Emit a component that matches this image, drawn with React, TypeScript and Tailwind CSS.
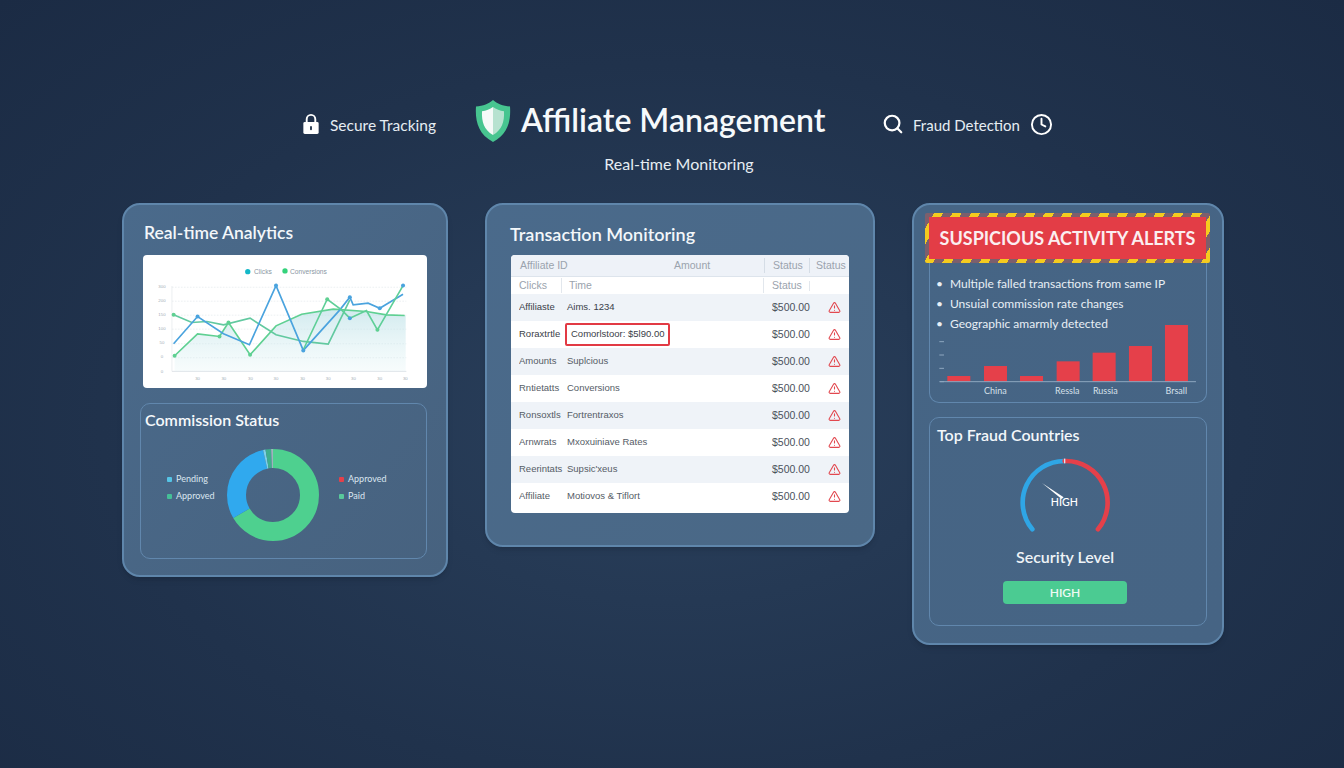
import { Clock, Search, TriangleAlert } from "lucide-react"

const rows = [
  { a: "Affiliaste", b: "Aims. 1234", dark: true },
  { a: "Roraxtrtle", b: "Comorlstoor: $5l90.00", flagged: true, dark: true },
  { a: "Amounts", b: "Suplcious" },
  { a: "Rntietatts", b: "Conversions" },
  { a: "Ronsoxtls", b: "Fortrentraxos" },
  { a: "Arnwrats", b: "Mxoxuiniave Rates" },
  { a: "Reerintats", b: "Supsic'xeus" },
  { a: "Affiliate", b: "Motiovos & Tiflort" },
]

const yTicks = [
  { y: 262, t: "300" },
  { y: 304, t: "200" },
  { y: 346, t: "150" },
  { y: 388, t: "100" },
  { y: 432, t: "50" },
  { y: 474, t: "0" },
  { y: 518, t: "0" },
]

const xTicks = [232, 311, 391, 468, 548, 625, 701, 780, 857]

const bars = [
  { x: 112, top: 528 },
  { x: 222, top: 498 },
  { x: 330, top: 528 },
  { x: 440, top: 484 },
  { x: 548, top: 458 },
  { x: 657, top: 438 },
  { x: 765, top: 375 },
]

function LineChart() {
  return (
    <svg viewBox="70 165 850 400" className="block h-[133px] w-[284px]" fontFamily="'Liberation Sans', sans-serif">
      <defs>
        <linearGradient id="area" x1="0" y1="0" x2="0" y2="1">
          <stop offset="0" stopColor="#b9dfe6" stopOpacity="0.65" />
          <stop offset="1" stopColor="#d8f0f2" stopOpacity="0.2" />
        </linearGradient>
      </defs>
      {yTicks.slice(0, 6).map((t) => (
        <line key={t.y} x1="155" x2="860" y1={t.y} y2={t.y} stroke="#e3e8ec" strokeWidth="2" strokeDasharray="5 4" />
      ))}
      <line x1="155" x2="860" y1="515" y2="515" stroke="#d0d7dd" strokeWidth="2" />
      <line x1="155" x2="155" y1="258" y2="515" stroke="#e3e8ec" strokeWidth="2" />
      <polygon
        points="163,468 232,402 298,410 325,368 390,465 468,378 545,343 640,328 740,335 800,345 858,347 858,515 163,515"
        fill="url(#area)"
      />
      <circle cx="383" cy="215" r="8" fill="#14b8c8" />
      <text x="402" y="222" fontSize="20" fill="#8a97a3">Clicks</text>
      <circle cx="495" cy="213" r="8" fill="#34d27b" />
      <text x="510" y="222" fontSize="20" fill="#8a97a3">Conversions</text>
      {yTicks.map((t) => (
        <text key={t.y} x="125" y={t.y + 2} fontSize="13" textAnchor="middle" fill="#a3adb6">{t.t}</text>
      ))}
      {xTicks.map((x) => (
        <text key={x} x={x} y="542" fontSize="13" textAnchor="middle" fill="#a3adb6">30</text>
      ))}
      <polyline
        points="160,345 215,368 260,365 310,375 390,355 468,405 550,425 625,433 690,300"
        fill="none"
        stroke="#62c9a0"
        strokeWidth="5"
      />
      <polyline
        points="163,468 232,402 298,410 325,368 390,465 468,378 545,343 640,328 740,335 800,345 855,347"
        fill="none"
        stroke="#5fd092"
        strokeWidth="5"
      />
      <polyline
        points="160,432 232,350 310,402 388,435 468,257 550,452 660,330 690,292 700,315 745,310 780,325 850,283"
        fill="none"
        stroke="#4aa3de"
        strokeWidth="5"
      />
      <polyline
        points="550,450 622,298 665,330 690,355 740,332 773,390 850,257"
        fill="none"
        stroke="#5fcf98"
        strokeWidth="5"
      />
      {[[232, 350], [468, 257], [550, 452], [690, 292], [690, 355], [780, 325], [850, 257]].map(([x, y]) => (
        <circle key={`${x}-${y}`} cx={x} cy={y} r="6" fill="#4aa3de" />
      ))}
      {[[160, 345], [163, 468], [298, 410], [325, 368], [390, 465], [622, 298], [773, 390]].map(([x, y]) => (
        <circle key={`${x}-${y}`} cx={x} cy={y} r="6" fill="#5fd092" />
      ))}
    </svg>
  )
}

function Donut() {
  const c = 2 * Math.PI * 36.5
  const seg = (from: number, to: number, color: string) => (
    <circle
      cx="46"
      cy="46"
      r="36.5"
      fill="none"
      stroke={color}
      strokeWidth="19"
      strokeDasharray={`${((to - from) / 360) * c} ${c}`}
      strokeDashoffset={-(from / 360) * c}
      transform="rotate(-90 46 46)"
    />
  )
  return (
    <svg viewBox="0 0 92 92" className="h-[92px] w-[92px]">
      {seg(0, 239.4, "#4ed08f")}
      {seg(239.4, 347, "#30a9ee")}
      {seg(347, 350, "#7fd0e8")}
      {seg(350, 357, "#3fae8e")}
      {seg(357, 360, "#9fb4bd")}
    </svg>
  )
}

function Legend({ color, label }: { color: string; label: string }) {
  return (
    <div className="flex items-center gap-[4px] text-[9px] leading-[10px] text-[#dbe6f0]">
      <span className={`h-[5px] w-[5px] rounded-[1px] ${color}`} />
      {label}
    </div>
  )
}

function LockIcon() {
  return (
    <svg viewBox="0 0 18 23" className="h-[22px] w-[18px]">
      <path d="M4.5 10V6.5a4.5 4.5 0 0 1 9 0V10" fill="none" stroke="#fff" strokeWidth="2" />
      <rect x="1" y="9.5" width="16" height="12.5" rx="1.5" fill="#fff" />
      <rect x="8" y="13.5" width="2" height="4.5" rx="1" fill="#26384f" />
    </svg>
  )
}

function ShieldIcon() {
  return (
    <svg viewBox="0 0 36 42" className="h-[42px] w-[36px]">
      <defs>
        <linearGradient id="shieldFace" x1="0" y1="0" x2="1" y2="0">
          <stop offset="0.5" stopColor="#f5faf8" />
          <stop offset="0.5" stopColor="#b7e2d0" />
        </linearGradient>
      </defs>
      <path d="M18 0c4 3.500 10 6 17 6.500C36 21 33 34 18 42 3 34 0 21 1 6.500 8 6 14 3.500 18 0z" fill="#47c590" />
      <path d="M18 7c3 2.200 7 3.800 11 4.200C29.500 22 27 29.500 18 35 9 29.500 6.500 22 7 11.200 11 10.800 15 9.200 18 7z" fill="url(#shieldFace)" />
    </svg>
  )
}

function HazardBanner() {
  return (
    <div className="h-[50px] w-[285px] rounded-[2px] bg-[repeating-linear-gradient(-60deg,#f4cb1f_0px,#f4cb1f_8px,#7d5f6c_8px,#7d5f6c_16px)] p-[4px]">
      <div className="flex h-full items-center justify-center bg-[#e33d46] font-['Lato',sans-serif] text-[18px] font-bold leading-none text-[#fbeef0]">
        SUSPICIOUS ACTIVITY ALERTS
      </div>
    </div>
  )
}

function BarChart() {
  return (
    <svg viewBox="60 375 820 212" className="-ml-[3px] -mt-[9px] block h-[70.700px] w-[273.300px]" fontFamily="'Lato', sans-serif">
      {[425, 465, 505, 545].map((y) => (
        <line key={y} x1="88" x2="102" y1={y} y2={y} stroke="#8fa8c0" strokeWidth="3" />
      ))}
      {bars.map((b) => (
        <rect key={b.x} x={b.x} y={b.top} width="69" height={545 - b.top} fill="#e5404a" />
      ))}
      <line x1="90" x2="858" y1="545" y2="545" stroke="#8fa8c0" strokeWidth="3" />
      <text x="256" y="582" fontSize="27" textAnchor="middle" fill="#d5e0ea">China</text>
      <text x="472" y="582" fontSize="27" textAnchor="middle" fill="#d5e0ea">Ressla</text>
      <text x="586" y="582" fontSize="27" textAnchor="middle" fill="#d5e0ea">Russia</text>
      <text x="799" y="582" fontSize="27" textAnchor="middle" fill="#d5e0ea">Brsall</text>
    </svg>
  )
}

function Gauge() {
  return (
    <svg viewBox="325 135 280 235" className="block h-[78.300px] w-[93.300px]" fontFamily="'Lato', sans-serif">
      <path d="M368 352 A125 125 0 0 1 465 147" fill="none" stroke="#2fa6e6" strokeWidth="14" strokeLinecap="round" />
      <path d="M465 147 A125 125 0 0 1 565 352" fill="none" stroke="#e5404a" strokeWidth="14" strokeLinecap="round" />
      <rect x="463" y="140" width="4" height="14" fill="#dbe6f0" />
      <polygon points="397,213 462,256 456,261" fill="#fff" />
      <text x="464" y="283" fontSize="32" textAnchor="middle" fill="#fff" fontWeight="500">HIGH</text>
    </svg>
  )
}

export default function App() {
  return (
    <div className="h-[768px] w-full overflow-hidden bg-[radial-gradient(ellipse_at_50%_55%,#2a405c_0%,#20324c_60%,#1b2b44_100%)] pt-[100px] font-['Lato',sans-serif] text-white">
      <div className="flex h-[42px] items-center pl-[302px]">
        <div className="mt-[6px]">
          <LockIcon />
        </div>
        <span className="ml-[10px] mt-[10px] w-[106px] whitespace-nowrap text-[15.500px] text-[#e6edf3]">Secure Tracking</span>
        <div className="ml-[39px]">
          <ShieldIcon />
        </div>
        <h1 className="-mt-[2px] ml-[10px] w-[306px] whitespace-nowrap text-[32px] font-semibold leading-[40px] text-[#f6f9fb]">Affiliate Management</h1>
        <Search className="ml-[55px] mt-[6px] h-[22px] w-[22px]" strokeWidth={2.4} />
        <span className="ml-[9px] mt-[9px] w-[107px] whitespace-nowrap text-[15px] text-[#e6edf3]">Fraud Detection</span>
        <Clock className="ml-[10px] mt-[6px] h-[23px] w-[23px]" strokeWidth={2} />
      </div>
      <p className="mt-[12px] pl-[14px] text-center text-[16px] leading-[20px] text-[#e6edf3]">Real-time Monitoring</p>

      <div className="mt-[29px] flex items-start gap-[37px] pl-[122px]">
        {/* analytics card */}
        <section className="h-[374px] w-[326px] rounded-[18px] border-2 border-[#5f86ab] bg-gradient-to-br from-[#4a6a8b] to-[#47627f] pl-[19px] pr-[19px] shadow-md">
          <h2 className="ml-[1px] mt-[16px] text-[17.500px] font-semibold leading-[24px] text-[#f3f7fa]">Real-time Analytics</h2>
          <div className="mt-[10px] w-[284px] overflow-hidden rounded-[4px] bg-white">
            <LineChart />
          </div>
          <div className="-ml-[3px] mt-[15px] h-[156px] w-[287px] rounded-[10px] border border-[#6187ad] pl-[4px]">
            <h3 className="mt-[4px] text-[16px] font-semibold leading-[24px] text-[#f6f9fb]">Commission Status</h3>
            <div className="mt-[17px] flex items-start">
              <div className="ml-[22px] mt-[25px] flex w-[64px] flex-col gap-[7px]">
                <Legend color="bg-[#55c4e6]" label="Pending" />
                <Legend color="bg-[#45bf97]" label="Approved" />
              </div>
              <div className="-ml-[4px]">
                <Donut />
              </div>
              <div className="ml-[20px] mt-[25px] flex flex-col gap-[7px]">
                <Legend color="bg-[#e5404a]" label="Approved" />
                <Legend color="bg-[#58c99b]" label="Paid" />
              </div>
            </div>
          </div>
        </section>

        {/* transactions card */}
        <section className="h-[344px] w-[390px] rounded-[18px] border-2 border-[#5f86ab] bg-gradient-to-br from-[#4a6a8b] to-[#4a6886] pl-[24px] shadow-md">
          <h2 className="-ml-[1px] mt-[17px] text-[18px] font-semibold leading-[24px] text-[#f3f7fa]">Transaction Monitoring</h2>
          <div className="mt-[9px] h-[258px] w-[338px] overflow-hidden rounded-[4px] bg-white font-['Liberation_Sans',sans-serif] text-[10.500px]">
            <div className="flex h-[22px] items-center border-b border-[#dde4ec] bg-[#eef2f8] pl-[9px] text-[#9aa3ad]">
              <span className="w-[154px]">Affiliate ID</span>
              <span className="w-[90px]">Amount</span>
              <span className="w-[45px] border-l border-[#d5dde6] pl-[8px]">Status</span>
              <span className="border-l border-[#d5dde6] pl-[6px]">Status</span>
            </div>
            <div className="flex h-[17px] items-center pl-[8px] text-[#9aa3ad]">
              <span className="w-[42px]">Clicks</span>
              <span className="w-[202px] border-l border-[#e2e7ed] pl-[7px]">Time</span>
              <span className="w-[46px] border-l border-[#e2e7ed] pl-[8px]">Status</span>
              <span className="h-[10px] border-l border-[#e2e7ed]" />
            </div>
            {rows.map((r, i) => (
              <div key={i} className={`flex h-[27px] items-center pl-[8px] ${i % 2 === 0 ? "bg-[#eff3f8]" : "bg-white"}`}>
                <span className={`w-[48px] truncate text-[9.500px] ${r.dark ? "text-[#3a4048]" : "text-[#555c66]"}`}>{r.a}</span>
                <div className="w-[205px] text-[9.500px]">
                  {r.flagged ? (
                    <span className="-ml-[2px] inline-block rounded-[2px] border-2 border-[#e23a44] px-[4px] py-[2px] text-[#3a4048]">{r.b}</span>
                  ) : (
                    <span className={r.dark ? "text-[#3a4048]" : "text-[#555c66]"}>{r.b}</span>
                  )}
                </div>
                <span className="w-[38px] text-[#4b525c]">$500.00</span>
                <TriangleAlert className="ml-[18px] h-[13px] w-[13px] text-[#e2484f]" strokeWidth={2} />
              </div>
            ))}
          </div>
        </section>

        {/* alerts card */}
        <section className="h-[442px] w-[312px] rounded-[18px] border-2 border-[#5f86ab] bg-gradient-to-br from-[#466585] to-[#466484] pl-[11px] pt-[8px] shadow-md">
          <HazardBanner />
          <div className="ml-[4px] h-[140px] w-[278px] rounded-b-[10px] border border-t-0 border-[#6187ad] pl-[3px]">
            <ul className="pt-[11px] text-[12px] leading-[20px] text-[#e8eff5]">
              <li className="flex gap-[7px] pl-[3px]"><span>•</span>Multiple falled transactions from same IP</li>
              <li className="flex gap-[7px] pl-[3px]"><span>•</span>Unsuial commission rate changes</li>
              <li className="flex gap-[7px] pl-[3px]"><span>•</span>Geographic amarmly detected</li>
            </ul>
            <BarChart />
          </div>
          <div className="ml-[4px] mt-[14px] flex h-[209px] w-[278px] flex-col rounded-[10px] border border-[#6187ad] pl-[7px]">
            <h3 className="mt-[5px] text-[16px] font-semibold leading-[24px] text-[#f3f7fa]">Top Fraud Countries</h3>
            <div className="flex flex-col items-center pr-[13px]">
              <div className="mt-[10px]">
                <Gauge />
              </div>
              <span className="mt-[10px] text-[16px] font-semibold leading-[24px] text-[#eef3f7]">Security Level</span>
              <span className="mt-[12px] flex h-[23px] w-[124px] items-center justify-center rounded-[4px] bg-[#4bcb92] text-[12px] font-semibold text-[#eefaf4]">HIGH</span>
            </div>
          </div>
        </section>
      </div>
    </div>
  )
}
